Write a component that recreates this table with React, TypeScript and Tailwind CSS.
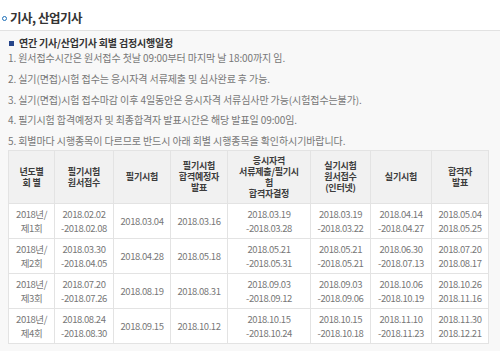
const notes = [
  "1. 원서접수시간은 원서접수 첫날 09:00부터 마지막 날 18:00까지 임.",
  "2. 실기(면접)시험 접수는 응시자격 서류제출 및 심사완료 후 가능.",
  "3. 실기(면접)시험 접수마감 이후 4일동안은 응시자격 서류심사만 가능(시험접수는불가).",
  "4. 필기시험 합격예정자 및 최종합격자 발표시간은 해당 발표일 09:00임.",
  "5. 회별마다 시행종목이 다르므로 반드시 아래 회별 시행종목을 확인하시기바랍니다.",
];

const headers = [
  ["년도별", "회 별"],
  ["필기시험", "원서접수"],
  ["필기시험"],
  ["필기시험", "합격예정자", "발표"],
  ["응시자격", "서류제출/필기시", "험", "합격자결정"],
  ["실기시험", "원서접수", "(인터넷)"],
  ["실기시험"],
  ["합격자", "발표"],
];

const widths = ["w-[46px]", "w-[59px]", "w-[57px]", "w-[57px]", "w-[83px]", "w-[60px]", "w-[61px]", "w-[57px]"];

const rows: string[][][] = [
  [["2018년/", "제1회"], ["2018.02.02", "-2018.02.08"], ["2018.03.04"], ["2018.03.16"], ["2018.03.19", "-2018.03.28"], ["2018.03.19", "-2018.03.22"], ["2018.04.14", "-2018.04.27"], ["2018.05.04", "2018.05.25"]],
  [["2018년/", "제2회"], ["2018.03.30", "-2018.04.05"], ["2018.04.28"], ["2018.05.18"], ["2018.05.21", "-2018.05.31"], ["2018.05.21", "-2018.05.21"], ["2018.06.30", "-2018.07.13"], ["2018.07.20", "2018.08.17"]],
  [["2018년/", "제3회"], ["2018.07.20", "-2018.07.26"], ["2018.08.19"], ["2018.08.31"], ["2018.09.03", "-2018.09.12"], ["2018.09.03", "-2018.09.06"], ["2018.10.06", "-2018.10.19"], ["2018.10.26", "2018.11.16"]],
  [["2018년/", "제4회"], ["2018.08.24", "-2018.08.30"], ["2018.09.15"], ["2018.10.12"], ["2018.10.15", "-2018.10.24"], ["2018.10.15", "-2018.10.18"], ["2018.11.10", "-2018.11.23"], ["2018.11.30", "2018.12.21"]],
];

const font = { fontFamily: '"Noto Sans CJK KR", "Liberation Sans", sans-serif' };

export default function App() {
  return (
    <div className="w-[500px] h-[351px] bg-white overflow-hidden text-[#666]" style={font}>
      {/* Section title */}
      <div className="flex items-center h-[30px] pl-[2px] pt-[6px]">
        <span className="w-[5px] h-[5px] rounded-full border-[1.5px] border-[#1d6fb8] mr-[3px]" />
        <span className="text-[12.5px] leading-[16px] font-bold text-[#333] tracking-[-0.5px]">기사, 산업기사</span>
      </div>

      {/* Gray panel */}
      <div className="border-t border-[#e2e2e2] bg-[#f8f8f8] px-2 pt-[6px] h-[321px]">
        <div className="flex items-center h-[12px]">
          <span className="w-[5px] h-[5px] bg-[#26458a] mr-[5px] ml-[1px]" />
          <span className="text-[10px] leading-[12px] font-bold text-[#333] tracking-[-0.2px]">연간 기사/산업기사 회별 검정시행일정</span>
        </div>
        <div className="-mt-px">
          {notes.map((n) => (
            <div key={n} className="h-[20.75px] leading-[20.75px] text-[10px] tracking-[-0.1px] text-[#777] whitespace-nowrap">
              {n}
            </div>
          ))}
        </div>

        <table className="-mt-[2px] border-collapse bg-white text-center w-[480px] table-fixed">
          <thead>
            <tr className="bg-[#f1f1f1]">
              {headers.map((h, i) => (
                <th key={i} className={`${widths[i]} border border-[#e3e3e3] p-0 font-bold text-[#3c3c3c]`}>
                  <div className="h-[52px] flex flex-col items-center justify-center text-[9px] leading-[11px] tracking-[-0.2px]">
                    {h.map((l, j) => (
                      <span key={j} className="block h-[11px] whitespace-nowrap">{l}</span>
                    ))}
                  </div>
                </th>
              ))}
            </tr>
          </thead>
          <tbody>
            {rows.map((r, i) => (
              <tr key={i}>
                {r.map((c, j) => (
                  <td key={j} className="border border-[#e3e3e3] p-0 text-[#777]">
                    <div className="h-[34px] flex flex-col items-center justify-center text-[9.5px] leading-[14px] tracking-[-0.45px]">
                      {c.map((l, k) => (
                        <span key={k} className="block h-[14px]">{l}</span>
                      ))}
                    </div>
                  </td>
                ))}
              </tr>
            ))}
          </tbody>
        </table>
      </div>
    </div>
  );
}
